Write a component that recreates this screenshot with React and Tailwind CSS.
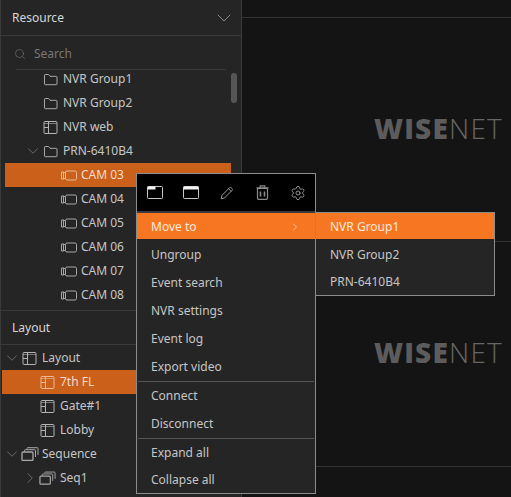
import { ChevronDown, ChevronRight, Search, Settings } from 'lucide-react';

const FONT = 'font-["Noto_Sans","Open_Sans",sans-serif]';

function FolderIcon() {
  return (
    <svg width="15" height="13" viewBox="0 0 15 13" fill="none" stroke="#a8a8a8" strokeWidth="1">
      <path d="M1.5 11V2.2c0-.5.3-.7.7-.7h3.4l1.4 1.8h6.3c.4 0 .7.3.7.7V11c0 .4-.3.7-.7.7H2.2c-.4 0-.7-.3-.7-.7z" />
    </svg>
  );
}

function LayoutIcon({ color = '#b4b4b4' }) {
  return (
    <svg width="15" height="13" viewBox="0 0 15 13" fill="none" stroke={color} strokeWidth="1">
      <rect x="1" y="0.5" width="13" height="12" rx="1" />
      <path d="M5.5 1v11M1 6.5h4.5" />
      <path d="M1 2.5h13" strokeWidth="0.6" />
    </svg>
  );
}

function CameraIcon({ color = '#a8a8a8' }) {
  return (
    <svg width="17" height="11" viewBox="0 0 17 11" fill="none" stroke={color} strokeWidth="1">
      <rect x="5.5" y="1" width="11" height="9" rx="1.5" />
      <path d="M5.5 3 3.5 2H1.5v7h2l2-1" />
      <path d="M3.5 2v7" />
    </svg>
  );
}

function StackIcon({ large }) {
  return (
    <svg width={large ? 18 : 17} height="14" viewBox="0 0 18 14" fill="none" stroke="#a8a8a8" strokeWidth="1">
      <rect x="1" y="5" width="11" height="8.5" rx="1" strokeWidth="1.3" />
      <path d="M3.5 4.5V3.5c0-.5.3-.8.8-.8h9.5c.5 0 .7.3.7.8v6.5" />
      <path d="M6 1.8V1.5c0-.5.3-.8.8-.8h9.5c.5 0 .7.3.7.8V8" />
    </svg>
  );
}

function Row({ x, children, selected }) {
  return (
    <div className={`flex h-6 items-center ${selected ? 'bg-[#cb601a] text-[#f3dccd]' : 'text-[#c6c6c6]'}`}>
      <div className={`flex items-center ${x}`}>{children}</div>
    </div>
  );
}

function Expand() {
  return <ChevronDown size={18} strokeWidth={1.2} color="#6f6f6f" className="-mx-[3px]" />;
}

function WindowIcon({ full }) {
  return (
    <svg width="16" height="13" viewBox="0 0 16 13" fill="none" stroke="#c8c8c8" strokeWidth="1">
      <rect x="0.5" y="0.5" width="15" height="12" rx="1" />
      <rect x="0.5" y="0.5" width={full ? 15 : 8} height="3" fill="#f2f2f2" stroke="none" />
    </svg>
  );
}

function PencilIcon() {
  return (
    <svg width="14" height="14" viewBox="0 0 14 14" fill="none" stroke="#9a9a9a" strokeWidth="1">
      <path d="M1.2 12.8l.8-3.4 7.4-7.6c.6-.6 1.4-.6 2 0l.6.6c.5.6.5 1.4 0 2l-7.4 7.5z" />
      <path d="M8.6 2.8l2.7 2.7" />
    </svg>
  );
}

function TrashIcon() {
  return (
    <svg width="13" height="15" viewBox="0 0 13 15" fill="none" stroke="#8a8a8a" strokeWidth="1.2">
      <path d="M1.5 3.5h10v9.8c0 .6-.4 1-1 1h-8c-.6 0-1-.4-1-1z" />
      <path d="M4.5 6.5v5M8.5 6.5v5" strokeWidth="1.6" />
      <path d="M0.5 2.8h12M4.2 2.5V.8h4.6v1.7" />
    </svg>
  );
}

function MenuItem({ label, last }) {
  return (
    <div className={`flex items-center pl-[14px] text-[#c6c6c6] ${last ? 'h-[26px]' : 'h-7'}`}>{label}</div>
  );
}

function Logo() {
  return (
    <div className="flex flex-1 items-center justify-end pr-[8px] pb-[4px]">
      <span className='font-["Open_Sans",sans-serif] text-[28px] leading-none tracking-[1.2px] text-[#5c5c5c]'>
        <span className="font-extrabold">WISE</span>
        <span className="font-light text-[#666]">NET</span>
      </span>
    </div>
  );
}

export default function App() {
  return (
    <div className={`relative flex h-[497px] w-[511px] overflow-hidden bg-[#141414] text-[12px] ${FONT}`}>
      {/* left panel */}
      <div className="flex w-[242px] shrink-0 flex-col border-x border-x-[#3a3a3a] bg-[#252525]">
        <div className="flex h-9 shrink-0 items-center justify-between border-b border-[#3a3a3a] pl-[11px] pr-[5px] pt-[1px] text-[#d6d6d6]">
          <span>Resource</span>
          <ChevronDown size={24} strokeWidth={1} color="#8a8a8a" />
        </div>
        <div className="mx-[15px] flex h-[34px] shrink-0 items-center gap-[8px] border-b border-[#3a3a3a] pt-[3px] text-[#777]">
          <Search size={12} strokeWidth={1.2} color="#777" className="-ml-[2px]" />
          <span>Search</span>
        </div>
        <div className="relative h-[240px] shrink-0 overflow-hidden pr-[10px] pl-1">
          <div className="absolute right-[4px] top-[3px] h-[30px] w-[6px] rounded-full bg-[#555]" />
          <div className="-mt-[3px]">
            <Row x="pl-[38px]"><FolderIcon /><span className="ml-[5px]">NVR Group1</span></Row>
            <Row x="pl-[38px]"><FolderIcon /><span className="ml-[5px]">NVR Group2</span></Row>
            <Row x="pl-[38px]"><LayoutIcon /><span className="ml-[5px]">NVR web</span></Row>
            <Row x="pl-[22px]"><Expand /><span className="ml-1"><FolderIcon /></span><span className="ml-[5px]">PRN-6410B4</span></Row>
            <Row x="pl-[55px]" selected><CameraIcon color="#e8b898" /><span className="ml-[4px]">CAM 03</span></Row>
            {['CAM 04', 'CAM 05', 'CAM 06', 'CAM 07', 'CAM 08'].map((c) => (
              <Row key={c} x="pl-[55px]"><CameraIcon /><span className="ml-[4px]">{c}</span></Row>
            ))}
          </div>
        </div>
        <div className="flex h-[35px] shrink-0 items-center border-y border-[#3a3a3a] pl-[11px] text-[#d6d6d6]">Layout</div>
        <div className="flex-1 overflow-hidden pl-[1px]">
          <div className="pt-[1px]">
            <Row x="pl-[4px]"><Expand /><span className="ml-1"><LayoutIcon /></span><span className="ml-[5px]">Layout</span></Row>
            <Row x="pl-[38px]" selected><LayoutIcon color="#e8b898" /><span className="ml-[5px]">7th FL</span></Row>
            <Row x="pl-[38px]"><LayoutIcon /><span className="ml-[5px]">Gate#1</span></Row>
            <Row x="pl-[38px]"><LayoutIcon /><span className="ml-[5px]">Lobby</span></Row>
            <Row x="pl-[4px]"><Expand /><span className="ml-[3px]"><StackIcon large /></span><span className="ml-[3px]">Sequence</span></Row>
            <Row x="pl-[22px]"><ChevronRight size={18} strokeWidth={1.2} color="#6f6f6f" className="-mx-[3px]" /><span className="ml-[3px]"><StackIcon /></span><span className="ml-[4px]">Seq1</span></Row>
          </div>
        </div>
      </div>

      {/* video area */}
      <div className="flex flex-1 flex-col">
        <div className="h-[18px] shrink-0 border-b border-[#333]" />
        <div className="flex h-[224px] shrink-0 border-b border-[#333]"><Logo /></div>
        <div className="flex h-[225px] shrink-0 border-b border-[#333]"><Logo /></div>
      </div>

      {/* context menu */}
      <div className="absolute left-[136px] top-[173px] w-[180px] border border-[#8c8c8c] bg-[#252525]">
        <div className="flex h-[37px] items-center justify-between bg-black pl-[10px] pr-[9px]">
          <span className="flex w-[16px] justify-center"><WindowIcon /></span>
          <span className="flex w-[16px] justify-center"><WindowIcon full /></span>
          <span className="flex w-[16px] justify-center"><PencilIcon /></span>
          <span className="flex w-[16px] justify-center"><TrashIcon /></span>
          <span className="flex w-[16px] justify-center"><Settings size={16} strokeWidth={1.2} color="#b0b0b0" /></span>
        </div>
        <div className="h-[2px] bg-[#3a3a3a]" />
        <div className="mb-[2px] flex h-[26px] items-center justify-between bg-[#f77622] pl-[14px] pr-[14px] pt-[1px] text-[#fdeadd]">
          <span>Move to</span>
          <ChevronRight size={12} strokeWidth={1.4} color="#fbe9dc" />
        </div>
        <MenuItem label="Ungroup" />
        <MenuItem label="Event search" />
        <MenuItem label="NVR settings" />
        <MenuItem label="Event log" />
        <MenuItem label="Export video" />
        <div className="mx-[1px] border-t border-[#555]" />
        <MenuItem label="Connect" />
        <MenuItem label="Disconnect" />
        <div className="mx-[1px] border-t border-[#555]" />
        <MenuItem label="Expand all" />
        <MenuItem label="Collapse all" last />
      </div>

      {/* submenu */}
      <div className="absolute left-[315px] top-[212px] w-[180px] border border-[#8c8c8c] bg-[#252525] text-[#c6c6c6]">
        <div className="mb-[2px] flex h-[26px] items-center bg-[#f77622] pl-[14px] pt-[1px] text-[#fdeadd]">NVR Group1</div>
        <MenuItem label="NVR Group2" />
        <MenuItem label="PRN-6410B4" last />
      </div>
    </div>
  );
}
